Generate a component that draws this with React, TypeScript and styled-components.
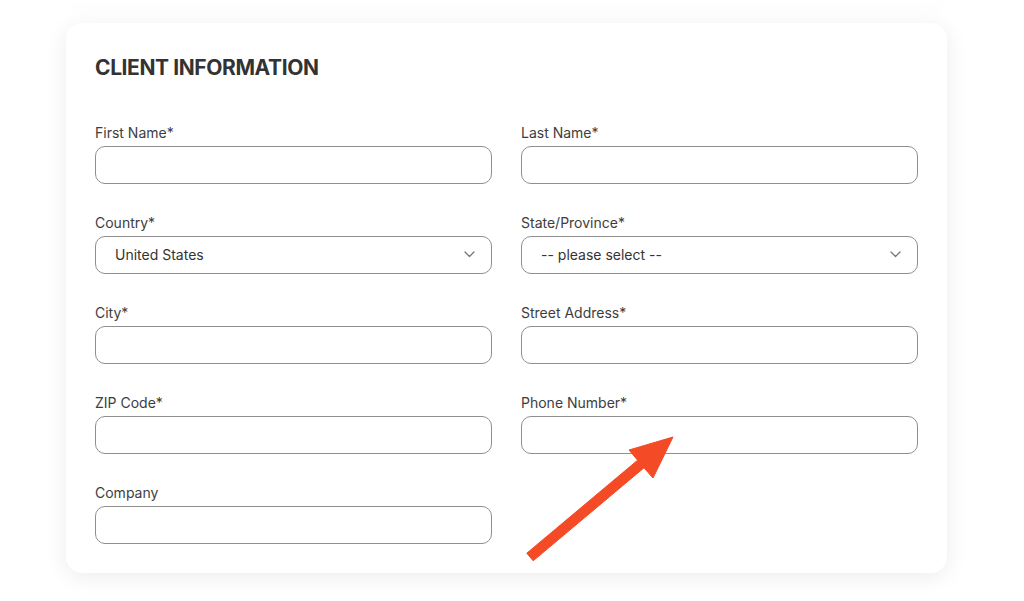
import React from "react";
import styled, { createGlobalStyle } from "styled-components";

const Global = createGlobalStyle`
  html, body { margin: 0; padding: 0; background: #ffffff; }
  body { font-family: Inter, "Open Sans", Arial, sans-serif; color: #333; }
  * { box-sizing: border-box; }
`;

const Page = styled.div`
  position: relative;
  width: 1024px;
  height: 601px;
  overflow: hidden;
  display: flex;
  flex-direction: column;
  align-items: flex-start;
  padding: 0 0 0 66px;
  gap: 21px;
`;

const PrevCard = styled.div`
  width: 881px;
  height: 2px;
  background: #fff;
  border-radius: 0 0 16px 16px;
  box-shadow: 0 4px 20px rgba(0, 0, 0, 0.07);
`;

const Card = styled.section`
  width: 881px;
  background: #fff;
  border-radius: 16px;
  box-shadow: 0 4px 22px rgba(0, 0, 0, 0.08);
  padding: 30px 29px 29px 29px;
`;

const Title = styled.h2`
  margin: 0 0 40px 0;
  font-family: Inter, sans-serif;
  font-weight: 700;
  font-size: 21px;
  line-height: 30px;
  letter-spacing: -0.4px;
  color: #333;
`;

const Grid = styled.div`
  display: grid;
  grid-template-columns: 397px 397px;
  column-gap: 29px;
  row-gap: 29px;
`;

const Field = styled.div`
  display: flex;
  flex-direction: column;
  gap: 3px;
`;

const Label = styled.label`
  font-family: Inter, sans-serif;
  font-size: 14px;
  line-height: 20px;
  color: #3d3d3d;
`;

const Input = styled.div`
  height: 38px;
  border: 1px solid #8f8f8f;
  border-radius: 10px;
  background: #fff;
  display: flex;
  align-items: center;
  justify-content: space-between;
  padding: 0 16px 1px 19px;
  font-family: Inter, sans-serif;
  font-size: 14px;
  color: #333;
`;

const Chevron = () => (
  <svg width="11" height="7" viewBox="0 0 11 7" fill="none">
    <path d="M1 1l4.5 4.5L10 1" stroke="#777" strokeWidth="1.3" strokeLinecap="round" strokeLinejoin="round" />
  </svg>
);

const Overlay = styled.svg`
  position: absolute;
  left: 0;
  top: 0;
  pointer-events: none;
`;

type F = { label: string; select?: string };
const fields: F[] = [
  { label: "First Name*" },
  { label: "Last Name*" },
  { label: "Country*", select: "United States" },
  { label: "State/Province*", select: "-- please select --" },
  { label: "City*" },
  { label: "Street Address*" },
  { label: "ZIP Code*" },
  { label: "Phone Number*" },
  { label: "Company" },
];

export default function App() {
  return (
    <Page>
      <Global />
      <PrevCard />
      <Card>
        <Title>CLIENT INFORMATION</Title>
        <Grid>
          {fields.map((f) => (
            <Field key={f.label}>
              <Label>{f.label}</Label>
              <Input>
                {f.select ? (
                  <>
                    <span>{f.select}</span>
                    <Chevron />
                  </>
                ) : null}
              </Input>
            </Field>
          ))}
        </Grid>
      </Card>
      <Overlay width="1024" height="601" viewBox="0 0 1024 601">
        <polygon
          points="526.8,553.2 637.6,460.2 629,450 673,437 653,478 644,467.8 533.2,560.8"
          fill="#F44A26"
          stroke="#F44A26"
          strokeWidth="1"
          strokeLinejoin="round"
        />
      </Overlay>
    </Page>
  );
}
